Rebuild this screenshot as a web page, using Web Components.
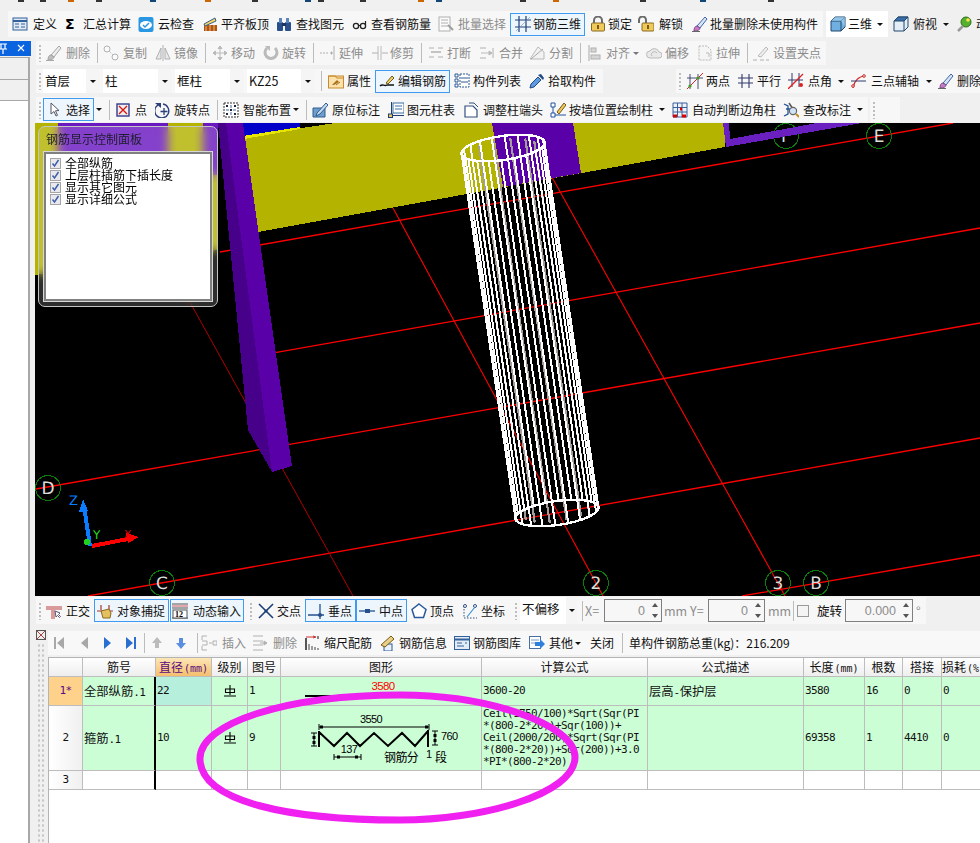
<!DOCTYPE html>
<html lang="zh">
<head>
<meta charset="utf-8">
<title>钢筋三维</title>
<style>
html,body{margin:0;height:843px;overflow:hidden;background:#f0f0f0;}
body{font:12px "Noto Sans CJK SC","Liberation Sans",sans-serif;color:#111;display:flex;flex-direction:column;position:relative;width:980px;}
</style>
</head>
<body>
<top-strip></top-strip>

<tool-row h="26" style="margin-left:8px">
  <tool-bar w="815" pad="4">
    <tool-item w="53" gap="5" icon="define">定义</tool-item>
    <tool-item w="73" gap="2" icon="sigma">汇总计算</tool-item>
    <tool-item w="64" gap="4" icon="cloud">云检查</tool-item>
    <tool-item w="74" gap="3" icon="level">平齐板顶</tool-item>
    <tool-item w="76" gap="4" icon="binoc">查找图元</tool-item>
    <tool-item w="86" gap="3" icon="glasses">查看钢筋量</tool-item>
    <tool-item w="72" gap="4" icon="batch" off>批量选择</tool-item>
    <tool-item w="75" p="5" gap="2" icon="rebar3d" on>钢筋三维</tool-item>
    <tool-item w="53" p="5" gap="2" icon="lock">锁定</tool-item>
    <tool-item w="54" gap="5" icon="unlock">解锁</tool-item>
    <tool-item w="130" gap="2" icon="brush">批量删除未使用构件</tool-item>
  </tool-bar>
  <tool-bar w="62" style="margin-left:3px;background:#fff">
    <tool-item w="62" p="4" gap="2" caret="5" icon="cube">三维</tool-item>
  </tool-bar>
  <tool-item w="69" p="5" gap="4" caret="6" icon="cubetop">俯视</tool-item>
  <tool-item w="40" gap="3" icon="ball">动</tool-item>
</tool-row>

<main-split>
  <side-dock></side-dock>
  <work-area>
    <tool-row h="24" style="margin-top:4px">
      <tool-bar w="790" style="margin-left:1px">
        <tool-grip w="10"></tool-grip>
        <tool-item w="48" gap="4" icon="brush" off>删除</tool-item>
        <tool-sep></tool-sep>
        <tool-item w="54" p="2" gap="4" icon="copy" off>复制</tool-item>
        <tool-item w="47" gap="3" icon="mirror" off>镜像</tool-item>
        <tool-sep></tool-sep>
        <tool-item w="54" p="3" gap="3" icon="move" off>移动</tool-item>
        <tool-item w="47" gap="3" icon="rotate" off>旋转</tool-item>
        <tool-sep></tool-sep>
        <tool-item w="55" p="3" gap="3" icon="extend" off>延伸</tool-item>
        <tool-item w="46" gap="2" icon="trim" off>修剪</tool-item>
        <tool-sep></tool-sep>
        <tool-item w="54" p="3" gap="3" icon="break" off>打断</tool-item>
        <tool-item w="50" gap="4" icon="merge" off>合并</tool-item>
        <tool-item w="48" gap="4" icon="split" off>分割</tool-item>
        <tool-sep></tool-sep>
        <tool-item w="62" p="3" gap="3" caret="3" icon="align" off>对齐</tool-item>
        <tool-item w="51" gap="3" icon="offset" off>偏移</tool-item>
        <tool-item w="47" gap="3" icon="stretch" off>拉伸</tool-item>
        <tool-sep></tool-sep>
        <tool-item w="72" p="2" gap="4" icon="grippt" off>设置夹点</tool-item>
      </tool-bar>
    </tool-row>

    <tool-row h="24" style="margin-top:4px">
      <tool-bar w="567" style="margin-left:1px">
        <tool-grip w="7"></tool-grip>
        <tool-combo w="60">首层</tool-combo>
        <tool-combo w="72">柱</tool-combo>
        <tool-combo w="72">框柱</tool-combo>
        <tool-combo w="71">KZ25</tool-combo>
        <tool-sep></tool-sep>
        <tool-item w="50" p="3" gap="3" icon="prop">属性</tool-item>
        <tool-item w="75" p="4" gap="3" icon="edit" on>编辑钢筋</tool-item>
        <tool-item w="79" p="4" gap="3" icon="list">构件列表</tool-item>
        <tool-item w="70" gap="3" icon="dropper">拾取构件</tool-item>
      </tool-bar>
      <tool-bar w="304" style="margin-left:73px">
        <tool-grip w="11"></tool-grip>
        <tool-item w="51" gap="3" icon="twopt">两点</tool-item>
        <tool-item w="50" gap="3" icon="parallel">平行</tool-item>
        <tool-item w="63" gap="4" caret="6" icon="ptangle">点角</tool-item>
        <tool-item w="87" gap="4" caret="7" icon="arc3">三点辅轴</tool-item>
        <tool-item w="42" gap="3" icon="brush">删除</tool-item>
      </tool-bar>
    </tool-row>

    <tool-row h="25" style="margin-top:4px">
      <tool-bar w="832" style="margin-left:1px">
        <tool-grip w="7"></tool-grip>
        <tool-item w="51" p="7" gap="0" icon="cursor" on>选择</tool-item>
        <tool-item w="12" p="2" caret="0"></tool-item>
        <tool-sep></tool-sep>
        <tool-item w="42" p="3" gap="3" icon="point">点</tool-item>
        <tool-item w="59" gap="3" icon="rotpt">旋转点</tool-item>
        <tool-sep></tool-sep>
        <tool-item w="82" p="2" gap="4" caret="2" icon="smart">智能布置</tool-item>
        <tool-sep></tool-sep>
        <tool-item w="78" p="2" gap="4" icon="mark">原位标注</tool-item>
        <tool-item w="75" gap="3" icon="coltable">图元柱表</tool-item>
        <tool-item w="87" gap="4" icon="colhead">调整柱端头</tool-item>
        <tool-item w="122" gap="3" caret="6" icon="wallcol">按墙位置绘制柱</tool-item>
        <tool-item w="111" gap="4" icon="autocol">自动判断边角柱</tool-item>
        <tool-item w="85" gap="4" caret="6" icon="checkmark">查改标注</tool-item>
      </tool-bar>
      <tool-bar w="30" style="margin-left:2px">
        <tool-grip w="10"></tool-grip>
      </tool-bar>
    </tool-row>

    <view-port><rebar-panel></rebar-panel></view-port>

    <tool-row h="27" style="margin-top:1px;margin-bottom:6px">
      <tool-bar w="890" style="margin-left:1px">
        <tool-grip w="10"></tool-grip>
        <tool-item w="48" gap="4" icon="ortho">正交</tool-item>
        <tool-item w="75" p="3" gap="4" icon="snap" on>对象捕捉</tool-item>
        <tool-item w="74" p="2" gap="5" icon="dyn" on style="margin-left:1px">动态输入</tool-item>
        <tool-grip w="11" style="margin-left:3px"></tool-grip>
        <tool-item w="47" gap="3" icon="cross">交点</tool-item>
        <tool-item w="51" p="3" gap="4" icon="perp" on>垂点</tool-item>
        <tool-item w="51" p="3" gap="4" icon="mid" on>中点</tool-item>
        <tool-item w="55" p="4" gap="3" icon="vertex">顶点</tool-item>
        <tool-item w="50" gap="3" icon="coord">坐标</tool-item>
        <tool-grip w="8"></tool-grip>
        <tool-combo w="60" edge="11">不偏移</tool-combo>
        <tool-sep w="5"></tool-sep>
        <coord-field label="X=" lw="19" w="58" value="0"></coord-field>
        <coord-field label="mm" lw="28" lp="2"></coord-field>
        <coord-field label="Y=" lw="18" w="57" value="0"></coord-field>
        <coord-field label="mm" lw="25" lp="3"></coord-field>
        <tool-sep w="7"></tool-sep>
        <tool-check></tool-check>
        <coord-field label="旋转" lw="36" lp="8" w="68" value="0.000" dark></coord-field>
        <coord-field label="°" lw="10" lp="3"></coord-field>
      </tool-bar>
    </tool-row>

    <bottom-pane>
      <tool-row h="24" style="margin-top:1px">
        <tool-bar w="932" style="background:#f8f8f8">
          <tool-item w="28" p="3" icon="first" off></tool-item>
          <tool-item w="23" icon="prev" off></tool-item>
          <tool-item w="24" icon="next"></tool-item>
          <tool-item w="18" icon="last"></tool-item>
          <tool-sep></tool-sep>
          <tool-item w="22" p="1" icon="up" off></tool-item>
          <tool-item w="24" p="3" icon="down"></tool-item>
          <tool-sep></tool-sep>
          <tool-item w="51" gap="5" icon="insert" off>插入</tool-item>
          <tool-item w="50" gap="5" icon="remove" off>删除</tool-item>
          <tool-item w="78" p="3" gap="3" icon="scale">缩尺配筋</tool-item>
          <tool-item w="74" gap="3" icon="info">钢筋信息</tool-item>
          <tool-item w="75" gap="3" icon="lib">钢筋图库</tool-item>
          <tool-item w="57" gap="4" caret="2" icon="other">其他</tool-item>
          <tool-item w="33" p="4" noicon>关闭</tool-item>
          <tool-sep></tool-sep>
          <tool-item w="180" p="3" noicon>单构件钢筋总重(kg)：216.209</tool-item>
        </tool-bar>
      </tool-row>
      <rebar-table></rebar-table>
    </bottom-pane>
  </work-area>
</main-split>
<ink-ring></ink-ring>

<script>
// 16x16 toolbar icons
const ICONS = {
  define:'<rect x="1" y="2" width="14" height="12" fill="#dfeaf6" stroke="#33619a"/><path d="M1 5h14" stroke="#33619a" stroke-width="2"/><path d="M3 8h4M3 11h4M9 8h4M9 11h4" stroke="#33619a"/>',
  sigma:'<text x="0" y="13" font-family="DejaVu Sans" font-weight="700" font-size="14" fill="#000">Σ</text>',
  cloud:'<rect x="0.5" y="1" width="15" height="15" rx="2" fill="#2a97e2"/><ellipse cx="8" cy="9" rx="6" ry="4" fill="#fff"/><path d="M5 9l2 2 4-4" fill="none" stroke="#2a97e2" stroke-width="1.5"/>',
  level:'<rect x="2" y="9" width="13" height="6" fill="#b0521c"/><path d="M4 9v6M8 9v6M12 9v6" stroke="#f2c25a"/><path d="M2 8L13 2l1 3L3 10z" fill="#f4d35e" stroke="#39618f"/>',
  binoc:'<rect x="1" y="6" width="6" height="9" rx="1" fill="#27508c"/><rect x="9" y="6" width="6" height="9" rx="1" fill="#27508c"/><rect x="3" y="2" width="3" height="5" fill="#5c86bb"/><rect x="10" y="2" width="3" height="5" fill="#5c86bb"/><rect x="6" y="7" width="4" height="3" fill="#1a365f"/>',
  glasses:'<circle cx="4" cy="10" r="2.6" fill="none" stroke="#222" stroke-width="1.3"/><circle cx="11" cy="10" r="2.6" fill="none" stroke="#222" stroke-width="1.3"/><path d="M6.5 9.5h2M13.5 9V5" stroke="#222" stroke-width="1.2"/>',
  batch:'<rect x="1" y="1" width="11" height="14" fill="#fff" stroke="#777"/><path d="M3 4h7M3 7h7M3 10h7" stroke="#777"/><path d="M10 9l5 5" stroke="#555" stroke-width="2"/>',
  rebar3d:'<path d="M0 4h16M0 11h16M4 0v16M11 0v16" stroke="#1f3f78" stroke-width="1.2"/><path d="M1 15L15 1" stroke="#6f8fc0" stroke-width=".6"/>',
  lock:'<rect x="1.5" y="7" width="13" height="8" rx="1" fill="#f0c95c" stroke="#8a6a1c"/><path d="M4 7V4.5a4 4 0 0 1 8 0V7" fill="none" stroke="#6b6b6b" stroke-width="2"/><rect x="7" y="9" width="2" height="4" fill="#7a5a12"/>',
  unlock:'<rect x="4" y="7" width="12" height="8" rx="1" fill="#f0c95c" stroke="#8a6a1c"/><path d="M1 7V4a3.5 3.5 0 0 1 7 0V7" fill="none" stroke="#6b6b6b" stroke-width="2"/><rect x="9" y="9" width="2" height="4" fill="#7a5a12"/>',
  brush:'<path d="M5 10L13 1l2 2-7 9z" fill="#d9e5f5" stroke="#3d67a8"/><path d="M2 15c0-3 1-5 3-5l3 2c0 2-3 3-6 3z" fill="#c77bc0" stroke="#7a4a8c"/><path d="M0 15.5h8" stroke="#666"/>',
  cube:'<path d="M1 5l4-4h10v10l-4 4H1z" fill="#6fb0e0" stroke="#23486f"/><path d="M1 5h10v10M11 5l4-4" fill="none" stroke="#23486f"/><path d="M5 1h10v10l-4-6H1z" fill="#a9d3f0" opacity=".6"/>',
  cubetop:'<path d="M1 5l4-4h10v10l-4 4H1z" fill="#e3eef8" stroke="#23486f"/><path d="M1 5l4-4h10l-4 4z" fill="#3b6ea8" stroke="#23486f"/><path d="M11 5v10M11 5l4-4" stroke="#23486f"/>',
  ball:'<circle cx="9" cy="6" r="5" fill="#55b030" stroke="#2c6e18"/><circle cx="11" cy="4" r="1.8" fill="#ffe14d"/><path d="M1 15l5-5" stroke="#999" stroke-width="2.5"/>',
  copy:'<circle cx="4" cy="4" r="3" fill="#fff" stroke="#777"/><circle cx="12" cy="12" r="3" fill="#fff" stroke="#777"/><path d="M6 6l4 4" stroke="#777" stroke-dasharray="1 1"/>',
  mirror:'<path d="M8 0v16" stroke="#777"/><path d="M1 14L6 3v11zM15 14L10 3v11z" fill="#ddd" stroke="#777"/>',
  move:'<path d="M8 1v14M1 8h14M8 1L6 3.5h4zM8 15l-2-2.5h4zM1 8l2.5-2v4zM15 8l-2.5-2v4z" fill="#888" stroke="#888"/>',
  rotate:'<path d="M4 3a6 6 0 1 0 8 0" fill="none" stroke="#888" stroke-width="3"/><path d="M2 1h5v5z" fill="#888"/>',
  extend:'<path d="M0 8h9" stroke="#777" stroke-dasharray="2 1"/><path d="M11 7h1v2h-1zM14 1v14" stroke="#777"/>',
  trim:'<path d="M0 8h6M10 8h6" stroke="#777"/><path d="M6 1v14M9 1v14" stroke="#888"/>',
  break:'<path d="M1 3h5M10 3h5M1 12h5M10 12h5" stroke="#777"/><path d="M3 7h10" stroke="#999" stroke-width="2"/>',
  merge:'<path d="M1 3h6M1 13h6M14 3v10" stroke="#777"/><path d="M2 8h11M13 8l-3-2v4z" stroke="#888" fill="#888"/>',
  split:'<path d="M1 14h14V7L9 2z" fill="#eee" stroke="#888"/><path d="M2 14L14 4" stroke="#666"/>',
  align:'<path d="M2 0v16" stroke="#666"/><rect x="4" y="3" width="5" height="4" fill="#bbb" stroke="#777"/><rect x="4" y="10" width="9" height="4" fill="#bbb" stroke="#777"/>',
  offset:'<path d="M4 13a3.5 3.5 0 0 1 0-7 5 5 0 0 1 9 1 3 3 0 0 1 0 6z" fill="#ddd" stroke="#888"/><path d="M6 11a2 2 0 0 1 0-3 3 3 0 0 1 5 0" fill="none" stroke="#888"/>',
  stretch:'<path d="M2 1h8l4 4v10H2z" fill="#f4f4f4" stroke="#888" stroke-dasharray="2 1"/><path d="M9 8h3v4" fill="none" stroke="#888"/>',
  grippt:'<path d="M0 15h4M7 15h4M13 15h3" stroke="#777"/><path d="M5 11L13 2l2 2-7 8z" fill="#e6e6e6" stroke="#888"/>',
  prop:'<rect x="0.5" y="3" width="15" height="12" fill="#fbe2ac" stroke="#c88a2c"/><path d="M0.5 3h7l1 2h7" fill="none" stroke="#c88a2c"/><path d="M4 12l5-5 2 2-5 3z" fill="#a8701c"/><path d="M8 12l4-3" stroke="#a8701c"/>',
  edit:'<path d="M1 13c3-3 4 1 7-1l7 0" fill="none" stroke="#111" stroke-width="1.4"/><path d="M7 10l6-7 2 2-6 6z" fill="#f3cf63" stroke="#6b5a1c"/>',
  list:'<path d="M1 1h3v3H1zM1 6h3v3H1zM1 11h3v3H1z" fill="#fff" stroke="#2a5a96"/><path d="M6 1h9v13H6z" fill="#fff" stroke="#2a5a96" stroke-dasharray="2 1"/><path d="M7 5h7M7 9h7" stroke="#2a5a96"/>',
  dropper:'<path d="M9 4l3 3-7 7-4 1 1-4z" fill="#5d9ade" stroke="#1f4a86"/><path d="M9 2l5 5 1-2-3-4z" fill="#1f4a86"/>',
  twopt:'<path d="M3 1v15M11 1v15M0 5h16" stroke="#333a6b" stroke-width=".9"/><path d="M0 16L16 0" stroke="#d22"/><circle cx="11" cy="5" r="1.6" fill="#3d9a26"/><circle cx="3" cy="13" r="1.6" fill="#3d9a26"/>',
  parallel:'<path d="M4 1v14M11 1v14M0 5h15M0 10h15" stroke="#333a6b" stroke-width="1.1"/>',
  ptangle:'<path d="M4 0v14M11 0v14M0 7h15" stroke="#333a6b" stroke-width="1"/><path d="M0 16L15 1" stroke="#d22" stroke-width="1.3"/><circle cx="13" cy="12" r="2" fill="#d22"/>',
  arc3:'<path d="M2 15C3 8 8 3 14 3" fill="none" stroke="#c22" stroke-width="1.2"/><circle cx="2" cy="13" r="1.3" fill="#fff" stroke="#c22"/><circle cx="13" cy="3" r="1.3" fill="#fff" stroke="#c22"/><path d="M0 8h15" stroke="#333a6b"/>',
  cursor:'<path d="M1 1l0 11 3-2.5 2 4.5 1.5-.7-2-4.5 3.5-.3z" fill="#fff" stroke="#556"/>',
  point:'<rect x="1" y="2" width="12" height="12" fill="#eee" stroke="#333a8c" stroke-width="1.4"/><path d="M3 4l8 8M11 4l-8 8" stroke="#d11" stroke-width="1.3"/>',
  rotpt:'<path d="M3 3a7 7 0 1 0 5-1" fill="none" stroke="#2c3f7a" stroke-width="1.4"/><path d="M0 1h6v5z" fill="#2c3f7a"/><path d="M9 6v7M5.5 9.5h7" stroke="#2c3f7a" stroke-width="1.3"/>',
  smart:'<rect x="1" y="1" width="14" height="14" fill="#fff" stroke="#333" stroke-dasharray="2 1"/><path d="M3 3h2v2H3zM11 3h2v2h-2zM3 11h2v2H3zM11 11h2v2h-2zM7 7h2v2H7z" fill="#223"/><path d="M8 3v3M8 10v3M3 8h3M10 8h3" stroke="#3a6ea5"/>',
  mark:'<path d="M1 6h12v9H1z" fill="#6f9dcc" stroke="#2d5c90"/><path d="M5 11L14 1l2 2-8 9-4 2z" fill="#c5daf0" stroke="#2d5c90"/>',
  coltable:'<path d="M3 0h1v13H16v1H3z" fill="#233e77"/><rect x="5" y="1" width="11" height="10" fill="#fff" stroke="#3a6ea5"/><path d="M7 4h7M7 7h7" stroke="#3a6ea5"/><rect x="0.5" y="12" width="4" height="3.5" fill="#f0c95c" stroke="#233e77"/>',
  colhead:'<path d="M2 4h8l4 4v7H2z" fill="#fff" stroke="#33507f" stroke-width="1.2"/><path d="M6 1h5l4 4" fill="none" stroke="#33507f"/>',
  wallcol:'<path d="M1 1h4v4H1zM1 11h4v4H1z" fill="#fff" stroke="#22539c"/><path d="M3 5v6M5 13h11" stroke="#22539c"/><path d="M7 10L14 1l2 2-7 9z" fill="#f1c75b" stroke="#735b15"/>',
  autocol:'<path d="M1 1h14v14H1zM5.5 1v14M10 1v14M1 5.5h14M1 10h14" fill="#eef3fa" stroke="#3a5f9c"/><path d="M1 14h4M10 14h4M8 7h2" stroke="#d00" stroke-width="3"/>',
  checkmark:'<path d="M1 2l4 2v8l-4 2M3 7h4" fill="none" stroke="#22539c" stroke-width="1.3"/><path d="M6 1l4 6" stroke="#555" stroke-width="1.5"/><circle cx="10" cy="9" r="3.6" fill="#cfe4f7" stroke="#666" stroke-width="1.2"/><path d="M13 12l3 3" stroke="#c69322" stroke-width="2"/>',
  ortho:'<path d="M0 3h16v4H9v9H5V7H0z" fill="#d89a9a"/><path d="M9 8l1 6 1.5-1.5 2 2 1-1-2-2L14 10z" fill="#fff" stroke="#557"/>',
  snap:'<path d="M0 8h16M4 2v5M12 2v5" stroke="#a33" stroke-width="1.2"/><path d="M4 8l8-2 2 4-1 5H6z" fill="#e4c060" stroke="#8a6a1c"/>',
  dyn:'<path d="M0 1h16M0 5h16M0 15h16" stroke="#555"/><path d="M0 3h16" stroke="#c33" stroke-width=".8"/><rect x="1" y="7" width="14" height="8" fill="#fff" stroke="#555"/><text x="3" y="14" font-family="Liberation Serif" font-weight="700" font-size="8" fill="#000">12</text>',
  cross:'<path d="M1 1l14 14M15 1L1 15" stroke="#1d3f78" stroke-width="1.6"/><circle cx="8" cy="8" r="1.6" fill="#1d3f78"/>',
  perp:'<path d="M0 12h16M12 1v15" stroke="#25508e" stroke-width="1.3"/><circle cx="12" cy="12" r="2" fill="#25508e"/>',
  mid:'<path d="M0 8h16" stroke="#25508e" stroke-width="1.3"/><rect x="6" y="6" width="5" height="4" fill="#25508e"/>',
  vertex:'<path d="M8 1l7 5.5-2.5 8h-9L1 6.5z" fill="#fff" stroke="#2a5a9c" stroke-width="1.5"/>',
  coord:'<path d="M2 3v12M2 15h13" stroke="#33507f" stroke-dasharray="1.5 1.5"/><circle cx="3" cy="3" r="1.5" fill="#fff" stroke="#33507f"/><circle cx="13" cy="3" r="1.5" fill="#fff" stroke="#33507f"/><path d="M5 14l4-5 4-5" stroke="#3a8fd0" stroke-width="1.2"/>',
  first:'<path d="M3 2h2v12H3zM13 2v12L6 8z" fill="#2a6fd0"/>',
  prev:'<path d="M12 2v12L5 8z" fill="#2a6fd0"/>',
  next:'<path d="M5 2v12l7-6z" fill="#2a6fd0"/>',
  last:'<path d="M3 2v12l7-6zM11 2h2v12h-2z" fill="#2a6fd0"/>',
  up:'<path d="M8 2l5 6h-3v5H6V8H3z" fill="#5a8ede"/>',
  down:'<path d="M6 3h4v5h3l-5 6-5-6h3z" fill="#5a8ede"/>',
  insert:'<path d="M1 1h5M1 6h5v4H1M1 15h5M1 1v4M1 11v4" fill="none" stroke="#777"/><path d="M8 8h3M12 6h4v4h-4z" fill="#eee" stroke="#777"/>',
  remove:'<path d="M1 1h10M1 6h10M1 10h10M1 15h10" stroke="#777"/><path d="M8 8h7M15 8l-3-2v4z" stroke="#777" fill="#777"/>',
  scale:'<path d="M1 3v12" stroke="#111" stroke-width="1.4"/><path d="M1 2h9M8 1l3 1-3 1" fill="none" stroke="#c33"/><path d="M4 15V9M7 15V11M10 15V12M13 15v-2" stroke="#777" stroke-width="1.4"/><path d="M13 1v3" stroke="#111"/>',
  info:'<rect x="4" y="9" width="8" height="7" fill="#eaf1fa" stroke="#2a5a96"/><path d="M1 10L11 1l3 3-9 8z" fill="#e8cf8c" stroke="#7a5a12"/>',
  lib:'<rect x="0.5" y="1.5" width="15" height="13" fill="#e2ebf6" stroke="#33619a"/><path d="M0.5 4.5h15" stroke="#33619a" stroke-width="2"/><path d="M3 8h5M3 11h7M11 8h2" stroke="#33619a"/>',
  other:'<rect x="0.5" y="1.5" width="11" height="12" fill="#fff" stroke="#4a6fa5"/><path d="M2 5h8M2 8h5" stroke="#7a9ac4"/><path d="M6 7h5V4l5 5-5 5v-3H6z" fill="#2f7fdc"/>'
};

// one shadow root per element, css + markup
function mount(el, html) {
  const root = el.attachShadow({ mode: 'open' });
  root.innerHTML = html;
  return root;
}

class TopStrip extends HTMLElement {
  connectedCallback() {
    const bits = [[18,'#333'],[40,'#333'],[68,'#c60'],[96,'#333'],[150,'#147'],[205,'#c60'],[252,'#333'],[305,'#147'],[318,'#333'],[360,'#333'],[418,'#c60'],[436,'#147'],[520,'#333'],[553,'#c60'],[640,'#333'],[700,'#147'],[768,'#333']];
    mount(this, `<style>:host{display:block;height:11px;flex:none;position:relative;}
      i{position:absolute;top:0;height:2px;width:6px;}</style>` +
      bits.map(b => `<i style="left:${b[0]}px;background:${b[1]}"></i>`).join(''));
  }
}
customElements.define('top-strip', TopStrip);

class ToolRow extends HTMLElement {
  connectedCallback() {
    mount(this, `<style>:host{display:flex;flex:none;height:${this.getAttribute('h')}px;align-items:stretch;}</style><slot></slot>`);
  }
}
customElements.define('tool-row', ToolRow);

class ToolBar extends HTMLElement {
  connectedCallback() {
    const w = this.getAttribute('w'), pad = this.getAttribute('pad') || 0;
    mount(this, `<style>:host{display:flex;flex:none;width:${w}px;padding-left:${pad}px;box-sizing:border-box;align-items:center;background:#f7f7f7;}</style><slot></slot>`);
  }
}
customElements.define('tool-bar', ToolBar);

class ToolItem extends HTMLElement {
  connectedCallback() {
    const w = this.getAttribute('w'), on = this.hasAttribute('on');
    const p = (+this.getAttribute('p') || 0) - (on ? 1 : 0), gap = this.getAttribute('gap') || 0;
    const icon = this.getAttribute('icon');
    const caret = this.getAttribute('caret');
    mount(this, `<style>
      :host{display:flex;flex:none;align-items:center;box-sizing:border-box;width:${w}px;height:100%;padding-left:${p}px;white-space:nowrap;color:#111;line-height:16px;overflow:hidden;}
      :host([on]){height:23px;border:1px solid #3f9bf2;background:#eef6fd;}
      :host([off]){color:#8c8c8c;}
      :host([off]) svg{filter:grayscale(1) opacity(.55);}
      svg.i{flex:none;width:16px;height:16px;margin-right:${gap}px;}
      .c{flex:none;margin-left:${caret}px;width:0;height:0;border:3px solid transparent;border-top:3px solid #111;border-bottom:0;}
      :host([off]) .c{border-top-color:#777;}
    </style>` +
    (icon ? `<svg class="i" viewBox="0 0 16 16">${ICONS[icon]}</svg>` : '') +
    `<slot></slot>` + (caret !== null ? '<span class="c"></span>' : ''));
  }
}
customElements.define('tool-item', ToolItem);

class ToolGrip extends HTMLElement {
  connectedCallback() {
    mount(this, `<style>:host{display:block;flex:none;width:${this.getAttribute('w')}px;height:18px;box-sizing:border-box;
      background:linear-gradient(#bdbdbd 2px,transparent 2px) 3px 1px/2px 4px repeat-y;}</style>`);
  }
}
customElements.define('tool-grip', ToolGrip);

class ToolSep extends HTMLElement {
  connectedCallback() {
    const w = +this.getAttribute('w') || 7;
    mount(this, `<style>:host{display:flex;flex:none;width:${w}px;height:20px;justify-content:center;}
      i{width:1px;background:#bcbcbc;}</style><i></i>`);
  }
}
customElements.define('tool-sep', ToolSep);

class ToolCombo extends HTMLElement {
  connectedCallback() {
    const edge = this.getAttribute('edge') || 14;
    mount(this, `<style>
      :host{display:flex;flex:none;box-sizing:border-box;width:${this.getAttribute('w')}px;height:100%;padding:0 3px 0 0;}
      .t{flex:1;background:#fff;padding-left:2px;line-height:23px;font-size:12.5px;white-space:nowrap;}
      .b{flex:none;width:${edge}px;background:#f5f5f5;display:flex;align-items:center;justify-content:center;}
      .b i{border:3px solid transparent;border-top:3px solid #111;border-bottom:0;}
    </style><div class="t"><slot></slot></div><div class="b"><i></i></div>`);
  }
}
customElements.define('tool-combo', ToolCombo);

class CoordField extends HTMLElement {
  connectedCallback() {
    const a = n => this.getAttribute(n);
    const box = a('w') ? `<div class="s"><span>${a('value')}</span>
      <svg viewBox="0 0 10 21" width="10" height="21"><path d="M2 7l3-4 3 4zM2 14l3 4 3-4z" fill="#555"/></svg></div>` : '';
    mount(this, `<style>
      :host{display:flex;flex:none;align-items:center;height:100%;}
      .l{width:${a('lw')}px;box-sizing:border-box;padding-left:${a('lp') || 0}px;color:${this.hasAttribute('dark') ? '#111' : '#8c8c8c'};white-space:nowrap;font-size:12.5px;}
      .s{box-sizing:border-box;width:${a('w')}px;height:23px;border:1px solid #7f7f7f;display:flex;align-items:center;justify-content:flex-end;color:#8c8c8c;font-size:12.5px;gap:5px;padding-right:1px;font-family:"Liberation Sans",sans-serif;}
    </style><div class="l">${a('label')}</div>${box}`);
  }
}
customElements.define('coord-field', CoordField);

class ToolCheck extends HTMLElement {
  connectedCallback() {
    mount(this, `<style>:host{display:block;flex:none;width:10px;height:10px;border:1px solid #9a9a9a;background:#f4f4f4;}</style>`);
  }
}
customElements.define('tool-check', ToolCheck);

class MainSplit extends HTMLElement {
  connectedCallback() {
    mount(this, `<style>:host{display:flex;flex:1;min-height:0;}</style><slot></slot>`);
  }
}
customElements.define('main-split', MainSplit);

class WorkArea extends HTMLElement {
  connectedCallback() {
    mount(this, `<style>:host{display:flex;flex-direction:column;flex:none;width:945px;overflow:hidden;}</style><slot></slot>`);
  }
}
customElements.define('work-area', WorkArea);

class SideDock extends HTMLElement {
  connectedCallback() {
    mount(this, `<style>
      :host{display:flex;flex-direction:column;flex:none;width:30px;margin:4px 5px 0 0;}
      .h{height:15px;width:31px;background:#0a64e0;flex:none;display:flex;align-items:center;}
      .b{flex:1;background:#fff;border-right:2px solid #a8a8a8;display:flex;flex-direction:column;margin-top:1px;}
      .r{box-sizing:border-box;height:22px;background:#f0f0f0;border-top:1px solid #a8a8a8;flex:none;}
      .r+.r{height:22px;border-bottom:1px solid #a8a8a8;}
    </style>
    <div class="h"><svg width="31" height="15" viewBox="0 0 31 15"><path d="M-1 3h8M1 3v5M5 3v5M-1 8h8M3 8v5" stroke="#fff" stroke-width="1.2" fill="none"/><path d="M18 4l6 6M24 4l-6 6" stroke="#fff" stroke-width="1.1"/></svg></div>
    <div class="b"><div class="r"></div><div class="r"></div></div>`);
  }
}
customElements.define('side-dock', SideDock);

class ViewPort extends HTMLElement {
  connectedCallback() {
    // rebar cage, both ellipses tilted the same way
    const tilt = -8 * Math.PI / 180;
    const pt = (cx, cy, rx, ry, t) => [
      cx + rx * Math.cos(t) * Math.cos(tilt) - ry * Math.sin(t) * Math.sin(tilt),
      cy + rx * Math.cos(t) * Math.sin(tilt) + ry * Math.sin(t) * Math.cos(tilt)
    ];
    let cage = '';
    for (let i = 0; i < 12; i++) {
      const t = (i + .5) / 12 * Math.PI * 2;
      const a = pt(503, 148, 33, 9, t), b = pt(557, 513, 33, 9, t);
      cage += `<line x1="${a[0]}" y1="${a[1]}" x2="${b[0]}" y2="${b[1]}" stroke="#a39c98" stroke-width="2.2"/>`;
    }
    for (let i = 0; i < 20; i++) {
      const t = (i + .25) / 20 * Math.PI * 2;
      const a = pt(503, 148, 42, 11.5, t), b = pt(557, 513, 42, 12, t);
      cage += `<line x1="${a[0]}" y1="${a[1]}" x2="${b[0]}" y2="${b[1]}" stroke="#fff" stroke-width="2"/>`;
    }
    const ring = (x, y) => `<ellipse cx="${x}" cy="${y}" rx="42" ry="12" transform="rotate(-8 ${x} ${y})" fill="none" stroke="#fff" stroke-width="2.4"/>`;
    const bub = (x, y, s) => `<circle cx="${x}" cy="${y}" r="12.5" fill="none" stroke="#0b7d0b"/>
      <text x="${x}" y="${y + 6}" text-anchor="middle" font-family="DejaVu Sans" font-size="17" fill="#ddd">${s}</text>`;
    mount(this, `<style>
      :host{display:block;flex:none;position:relative;height:473px;margin-top:1px;background:#000;overflow:hidden;}
      svg{display:block;}
      ::slotted(rebar-panel){position:absolute;left:3px;top:3px;}
    </style>
    <svg width="945" height="473" viewBox="35 123 945 473" shape-rendering="crispEdges" text-rendering="geometricPrecision">
      <g fill="none" stroke="#f00" stroke-width="1.3" shape-rendering="auto">
        <path d="M220 252L953 123M250 357L980 228M36 489L980 323M88 596L980 438M742 596L980 555"/>
        <path d="M393 208L603 596M548 170L785 596" stroke-width="1.1"/>
        <path d="M100 140L353 596" stroke="#b00000" stroke-width="1"/>
      </g>
      <path d="M35 123H218V250L35 275z" fill="#b3b300"/>
      <path d="M58 123H168V162H58zM203 123H218V175H203z" fill="#6a18c0"/>
      <path d="M243 137L335 123H725V147L258 232z" fill="#b3b300"/>
      <path d="M243 123H300V128L243 137z" fill="#0000c8"/>
      <path d="M243 136L300 127V129L244 139z" fill="#e6e600"/>
      <path d="M492 123H573L581 173L503 187z" fill="#5a00a8"/>
      <path d="M218 123H226L272 472L248 430z" fill="#47008a"/>
      <path d="M226 123H243L292 466L272 472z" fill="#5a00a8"/>
      ${bub(786, 136, 'F')}${bub(879, 136, 'E')}
      <path d="M723 123H729L730 139L817 123H862L726 147z" fill="#6a20c0"/>
      ${bub(48, 488, 'D')}${bub(162, 583, 'C')}${bub(596, 583, '2')}${bub(778, 583, '3')}${bub(816, 583, 'B')}
      ${cage}${ring(503, 148)}${ring(557, 513)}
      <path d="M90 546L84 506" stroke="#0a7cff" stroke-width="4"/>
      <path d="M83 499L79 512L88 511z" fill="#0a7cff"/>
      <path d="M92 546L128 539" stroke="#f00" stroke-width="4"/>
      <path d="M139 537L126 533L128 543z" fill="#f00"/>
      <circle cx="87" cy="542" r="3" fill="#1fd21f"/>
      <text x="69" y="505" font-family="DejaVu Sans" font-size="13" fill="#0a7cff">Z</text>
      <text x="93" y="539" font-family="DejaVu Sans" font-size="12" fill="#22dd22">Y</text>
      <text x="124" y="538" font-family="DejaVu Sans" font-size="11" fill="#d00">X</text>
    </svg><slot></slot>`);
  }
}
customElements.define('view-port', ViewPort);

class RebarPanel extends HTMLElement {
  connectedCallback() {
    const rows = ['全部纵筋', '上层柱插筋下插长度', '显示其它图元', '显示详细公式'];
    mount(this, `<style>
      :host{display:block;box-sizing:border-box;width:180px;height:181px;border:1px solid #c4c4c4;border-radius:7px;background:rgba(255,255,255,.18);backdrop-filter:blur(5px);padding:0 5px;}
      .t{height:25px;line-height:24px;padding-left:2px;color:#1c1c2c;}
      .b{box-sizing:border-box;height:149px;background:#fff;border:2px solid #808080;box-shadow:0 0 0 1px #d8d8d8;padding:3px 0 0 4px;}
      .r{display:flex;align-items:center;height:12px;line-height:12px;color:#000;white-space:nowrap;}
      svg{flex:none;margin-right:4px;}
    </style><div class="t">钢筋显示控制面板</div><div class="b">` +
    rows.map(r => `<div class="r"><svg width="11" height="11" viewBox="0 0 11 11"><rect x=".5" y=".5" width="10" height="10" fill="#e8e8ee" stroke="#a5a5a5"/><path d="M2.5 5.5l2 2.5 4-6" fill="none" stroke="#3f5fa8" stroke-width="1.5"/></svg><span>${r}</span></div>`).join('') +
    `</div>`);
  }
}
customElements.define('rebar-panel', RebarPanel);

class BottomPane extends HTMLElement {
  connectedCallback() {
    mount(this, `<style>
      :host{display:grid;grid-template-columns:13px 1fr;flex:1;min-height:0;}
      .g{position:relative;}
      .g svg{display:block;margin:0 0 3px 1px;}
      .d{position:absolute;left:2px;top:13px;bottom:0;width:8px;background:radial-gradient(circle,#c6c6c6 1px,transparent 1.3px) 0 0/4px 5px;}
      .m{min-width:0;display:flex;flex-direction:column;}
    </style>
    <div class="g"><svg width="10" height="10" viewBox="0 0 10 10"><rect x=".5" y=".5" width="9" height="9" fill="#eee" stroke="#555"/><path d="M1 1l8 8M9 1L1 9" stroke="#a44"/></svg><div class="d"></div></div>
    <div class="m"><slot></slot></div>`);
  }
}
customElements.define('bottom-pane', BottomPane);

class RebarTable extends HTMLElement {
  connectedCallback() {
    const grade = `<svg width="12" height="12" viewBox="0 0 12 12"><path d="M6 0v10M1.5 4h9v3.5h-9zM0 11h12" fill="none" stroke="#000" stroke-width="1.1"/></svg>`;
    const formula = ['Ceil(1750/100)*Sqrt(Sqr(PI', '*(800-2*20))+Sqr(100))+', 'Ceil(2000/200)*Sqrt(Sqr(PI', '*(800-2*20))+Sqr(200))+3.0', '*PI*(800-2*20)'];
    const mm = '<small>(mm)</small>';
    mount(this, `<style>
      :host{display:block;flex:1;background:#fff;margin-top:2px;border-top:1px solid #b4b4b4;border-left:1px solid #b4b4b4;overflow:hidden;}
      table{border-collapse:separate;border-spacing:0;table-layout:fixed;width:932px;}
      th,td{box-sizing:border-box;border-right:1px solid #bdbdbd;border-bottom:1px solid #bdbdbd;padding:0;overflow:hidden;white-space:nowrap;}
      th{height:19px;font-weight:400;background:linear-gradient(#fff,#eee);line-height:16px;}
      th small{font:10px "DejaVu Sans Mono",monospace;margin-left:1px;}
      th.sel{background:linear-gradient(#fde6b6,#f4bf6c);color:#5a0a80;}
      td{background:#ccfed6;padding-left:1px;font:11px/12px "DejaVu Sans Mono","Noto Sans CJK SC",monospace;letter-spacing:-.62px;}
      td.zh{font:12.3px/16px "Noto Sans CJK SC",sans-serif;letter-spacing:0;}
      td .a{font:11px "DejaVu Sans Mono",monospace;letter-spacing:-.62px;}
      td.n{background:linear-gradient(90deg,#fff,#f0f0f0);text-align:center;padding:0;}
      td.cur{background:#ffd28c;color:#5a0a80;}
      td.sel{background:#b6f0dd;}
      td.c{text-align:center;padding:0;}
      td.bar{border-right:2px solid #000;}
      tr.e td:not(.n){background:#fff;}
      svg{display:block;}
      td svg.g{margin:auto;}
    </style>
    <table>
      <colgroup><col style="width:34px"><col style="width:73px"><col style="width:56px"><col style="width:36px"><col style="width:33px"><col style="width:201px"><col style="width:166px"><col style="width:156px"><col style="width:61px"><col style="width:38px"><col style="width:39px"><col style="width:39px"></colgroup>
      <tr><th></th><th>筋号</th><th class="sel">直径${mm}</th><th>级别</th><th>图号</th><th>图形</th><th>计算公式</th><th>公式描述</th><th>长度${mm}</th><th>根数</th><th>搭接</th><th>损耗<small>(%)</small></th></tr>
      <tr style="height:29px">
        <td class="n cur">1*</td><td class="zh bar">全部纵筋<span class="a">.1</span></td><td class="sel">22</td><td class="c">${grade.replace('<svg', '<svg class="g"')}</td><td>1</td>
        <td><svg width="200" height="28" viewBox="280 677 200 28"><text x="381" y="690" text-anchor="middle" font-family="Liberation Sans" font-size="11.5" fill="#f00">3580</text><path d="M303 696H453" stroke="#000" stroke-width="2"/></svg></td>
        <td>3600-20</td><td class="zh">层高<span class="a">-</span>保护层</td><td>3580</td><td>16</td><td>0</td><td>0</td>
      </tr>
      <tr style="height:65px">
        <td class="n">2</td><td class="zh bar">箍筋<span class="a">.1</span></td><td>10</td><td class="c">${grade.replace('<svg', '<svg class="g"')}</td><td>9</td>
        <td><rebar-shape></rebar-shape></td>
        <td>${formula.join('<br>')}</td><td></td><td>69358</td><td>1</td><td>4410</td><td>0</td>
      </tr>
      <tr class="e" style="height:19px"><td class="n">3</td><td class="bar"></td><td></td><td></td><td></td><td></td><td></td><td></td><td></td><td></td><td></td><td></td></tr>
    </table>`);
  }
}
customElements.define('rebar-table', RebarTable);

class RebarShape extends HTMLElement {
  connectedCallback() {
    mount(this, `<style>:host{display:block;font:12px "Noto Sans CJK SC",sans-serif;}svg{display:block;}</style>
    <svg width="200" height="64" viewBox="280 706 200 64" font-family="Liberation Sans" font-size="11" fill="#000">
      <text x="369" y="723" text-anchor="middle">3550</text>
      <path d="M317 727H427M317 724v6M427 724v6" stroke="#000" fill="none"/>
      <path d="M318 727h3M423 727h3" stroke="#000" stroke-width="3"/>
      <path d="M317 731v16M317 732L332 746L345 733L358 746L372 733L386 746L400 733L413 746L426 731M426 730v17" fill="none" stroke="#000" stroke-width="2"/>
      <path d="M312 733v13M309 733h6M309 746h6M433 731v14M430 731h6M430 745h6" stroke="#000" fill="none"/>
      <path d="M312 736v3M312 741v3M433 734v3M433 739v3" stroke="#000" stroke-width="3"/>
      <text x="439" y="740">760</text>
      <text x="347" y="753" text-anchor="middle">137</text>
      <path d="M332 757H359M332 754v6M359 754v6" stroke="#000" fill="none"/>
      <path d="M335 757h3M353 757h3" stroke="#000" stroke-width="3"/>
      <text x="382" y="762" font-family="Noto Sans CJK SC" font-size="12">钢筋分</text>
      <text x="424" y="758">1</text>
      <text x="433" y="762" font-family="Noto Sans CJK SC" font-size="12">段</text>
    </svg>`);
  }
}
customElements.define('rebar-shape', RebarShape);

// hand drawn marker ring over the table
class InkRing extends HTMLElement {
  connectedCallback() {
    mount(this, `<style>:host{position:absolute;left:190px;top:685px;width:400px;height:145px;pointer-events:none;}svg{display:block;}</style>
    <svg width="400" height="145" viewBox="190 685 400 145"><path d="M200 760C198 722 290 695 400 695C490 695 575 725 575 757C575 795 480 820 400 820C290 820 202 802 200 760Z" fill="none" stroke="#f020f0" stroke-width="7"/></svg>`);
  }
}
customElements.define('ink-ring', InkRing);
</script>
</body>
</html>
